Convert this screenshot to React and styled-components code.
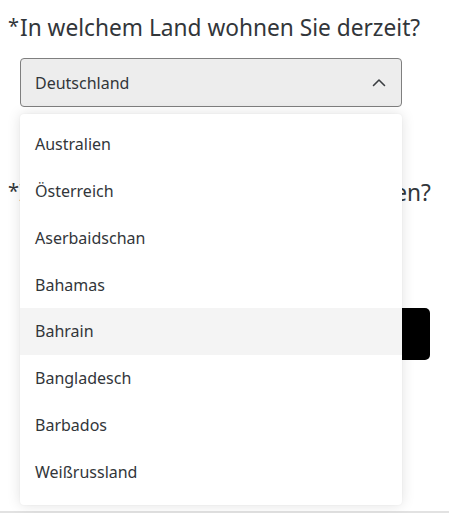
import React from "react";
import styled, { createGlobalStyle } from "styled-components";

const Global = createGlobalStyle`
  html, body { margin: 0; padding: 0; background: #fff; }
  body { font-family: "Noto Sans", "Open Sans", sans-serif; color: #32363a; overflow: hidden; }
`;

const Page = styled.div`
  width: 449px;
  height: 513px;
  box-sizing: border-box;
  position: relative;
  border-bottom: 2px solid #e2e2e2;
  padding: 12px 19px 0 8px;
`;

const Question = styled.div`
  display: flex;
  align-items: flex-start;
  font-size: 22.7px;
  line-height: 32px;
  color: #32363a;
  white-space: nowrap;
  margin-top: ${(p) => p.$mt || 0}px;
`;

const Star = styled.span`
  width: 12px;
  font-size: 20px;
  line-height: 28px;
`;

const Field = styled.div`
  position: relative;
  margin: 14px 0 0 12px;
  width: 382px;
`;

const SelectBox = styled.div`
  height: 49px;
  box-sizing: border-box;
  border: 1px solid #7f7f7f;
  border-radius: 4px;
  background: #ededed;
  display: flex;
  align-items: center;
  justify-content: space-between;
  padding: 0 15px 0 14px;
  font-size: 16px;
  color: #32363a;
`;

const Menu = styled.ul`
  position: absolute;
  top: 56px;
  left: 0;
  width: 382px;
  margin: 0;
  padding: 7px 0 10px;
  list-style: none;
  background: #fff;
  border-radius: 4px;
  box-shadow: 0 0 14px rgba(0, 0, 0, 0.12), 0 0 2px rgba(0, 0, 0, 0.06);
  z-index: 2;
`;

const Item = styled.li`
  height: 46.75px;
  display: flex;
  align-items: center;
  padding-left: 15px;
  font-size: 16px;
  color: #32363a;
  background: ${(p) => (p.$active ? "#f4f4f4" : "transparent")};
`;

const Answer = styled.div`
  height: 99px;
`;

const ButtonRow = styled.div`
  display: flex;
  justify-content: flex-end;
`;

const NextButton = styled.div`
  width: 160px;
  height: 52px;
  background: #000;
  border-radius: 5px;
`;

const Chevron = () => (
  <svg width="14" height="9" viewBox="0 0 14 9" fill="none">
    <path d="M1.5 7.5 L7 2 L12.5 7.5" stroke="#3b3e42" strokeWidth="1.6" strokeLinecap="round" strokeLinejoin="round" />
  </svg>
);

const countries = [
  "Australien",
  "Österreich",
  "Aserbaidschan",
  "Bahamas",
  "Bahrain",
  "Bangladesch",
  "Barbados",
  "Weißrussland",
];

export default function App() {
  return (
    <>
      <Global />
      <Page>
        <Question>
          <Star>*</Star>
          <span>In welchem Land wohnen Sie derzeit?</span>
        </Question>
        <Field>
          <SelectBox>
            <span>Deutschland</span>
            <Chevron />
          </SelectBox>
          <Menu>
            {countries.map((c) => (
              <Item key={c} $active={c === "Bahrain"}>
                {c}
              </Item>
            ))}
          </Menu>
        </Field>
        <Question $mt={70}>
          <Star>*</Star>
          <span>In welchem Land wurden Sie geboren?</span>
        </Question>
        <Answer />
        <ButtonRow>
          <NextButton />
        </ButtonRow>
      </Page>
    </>
  );
}
